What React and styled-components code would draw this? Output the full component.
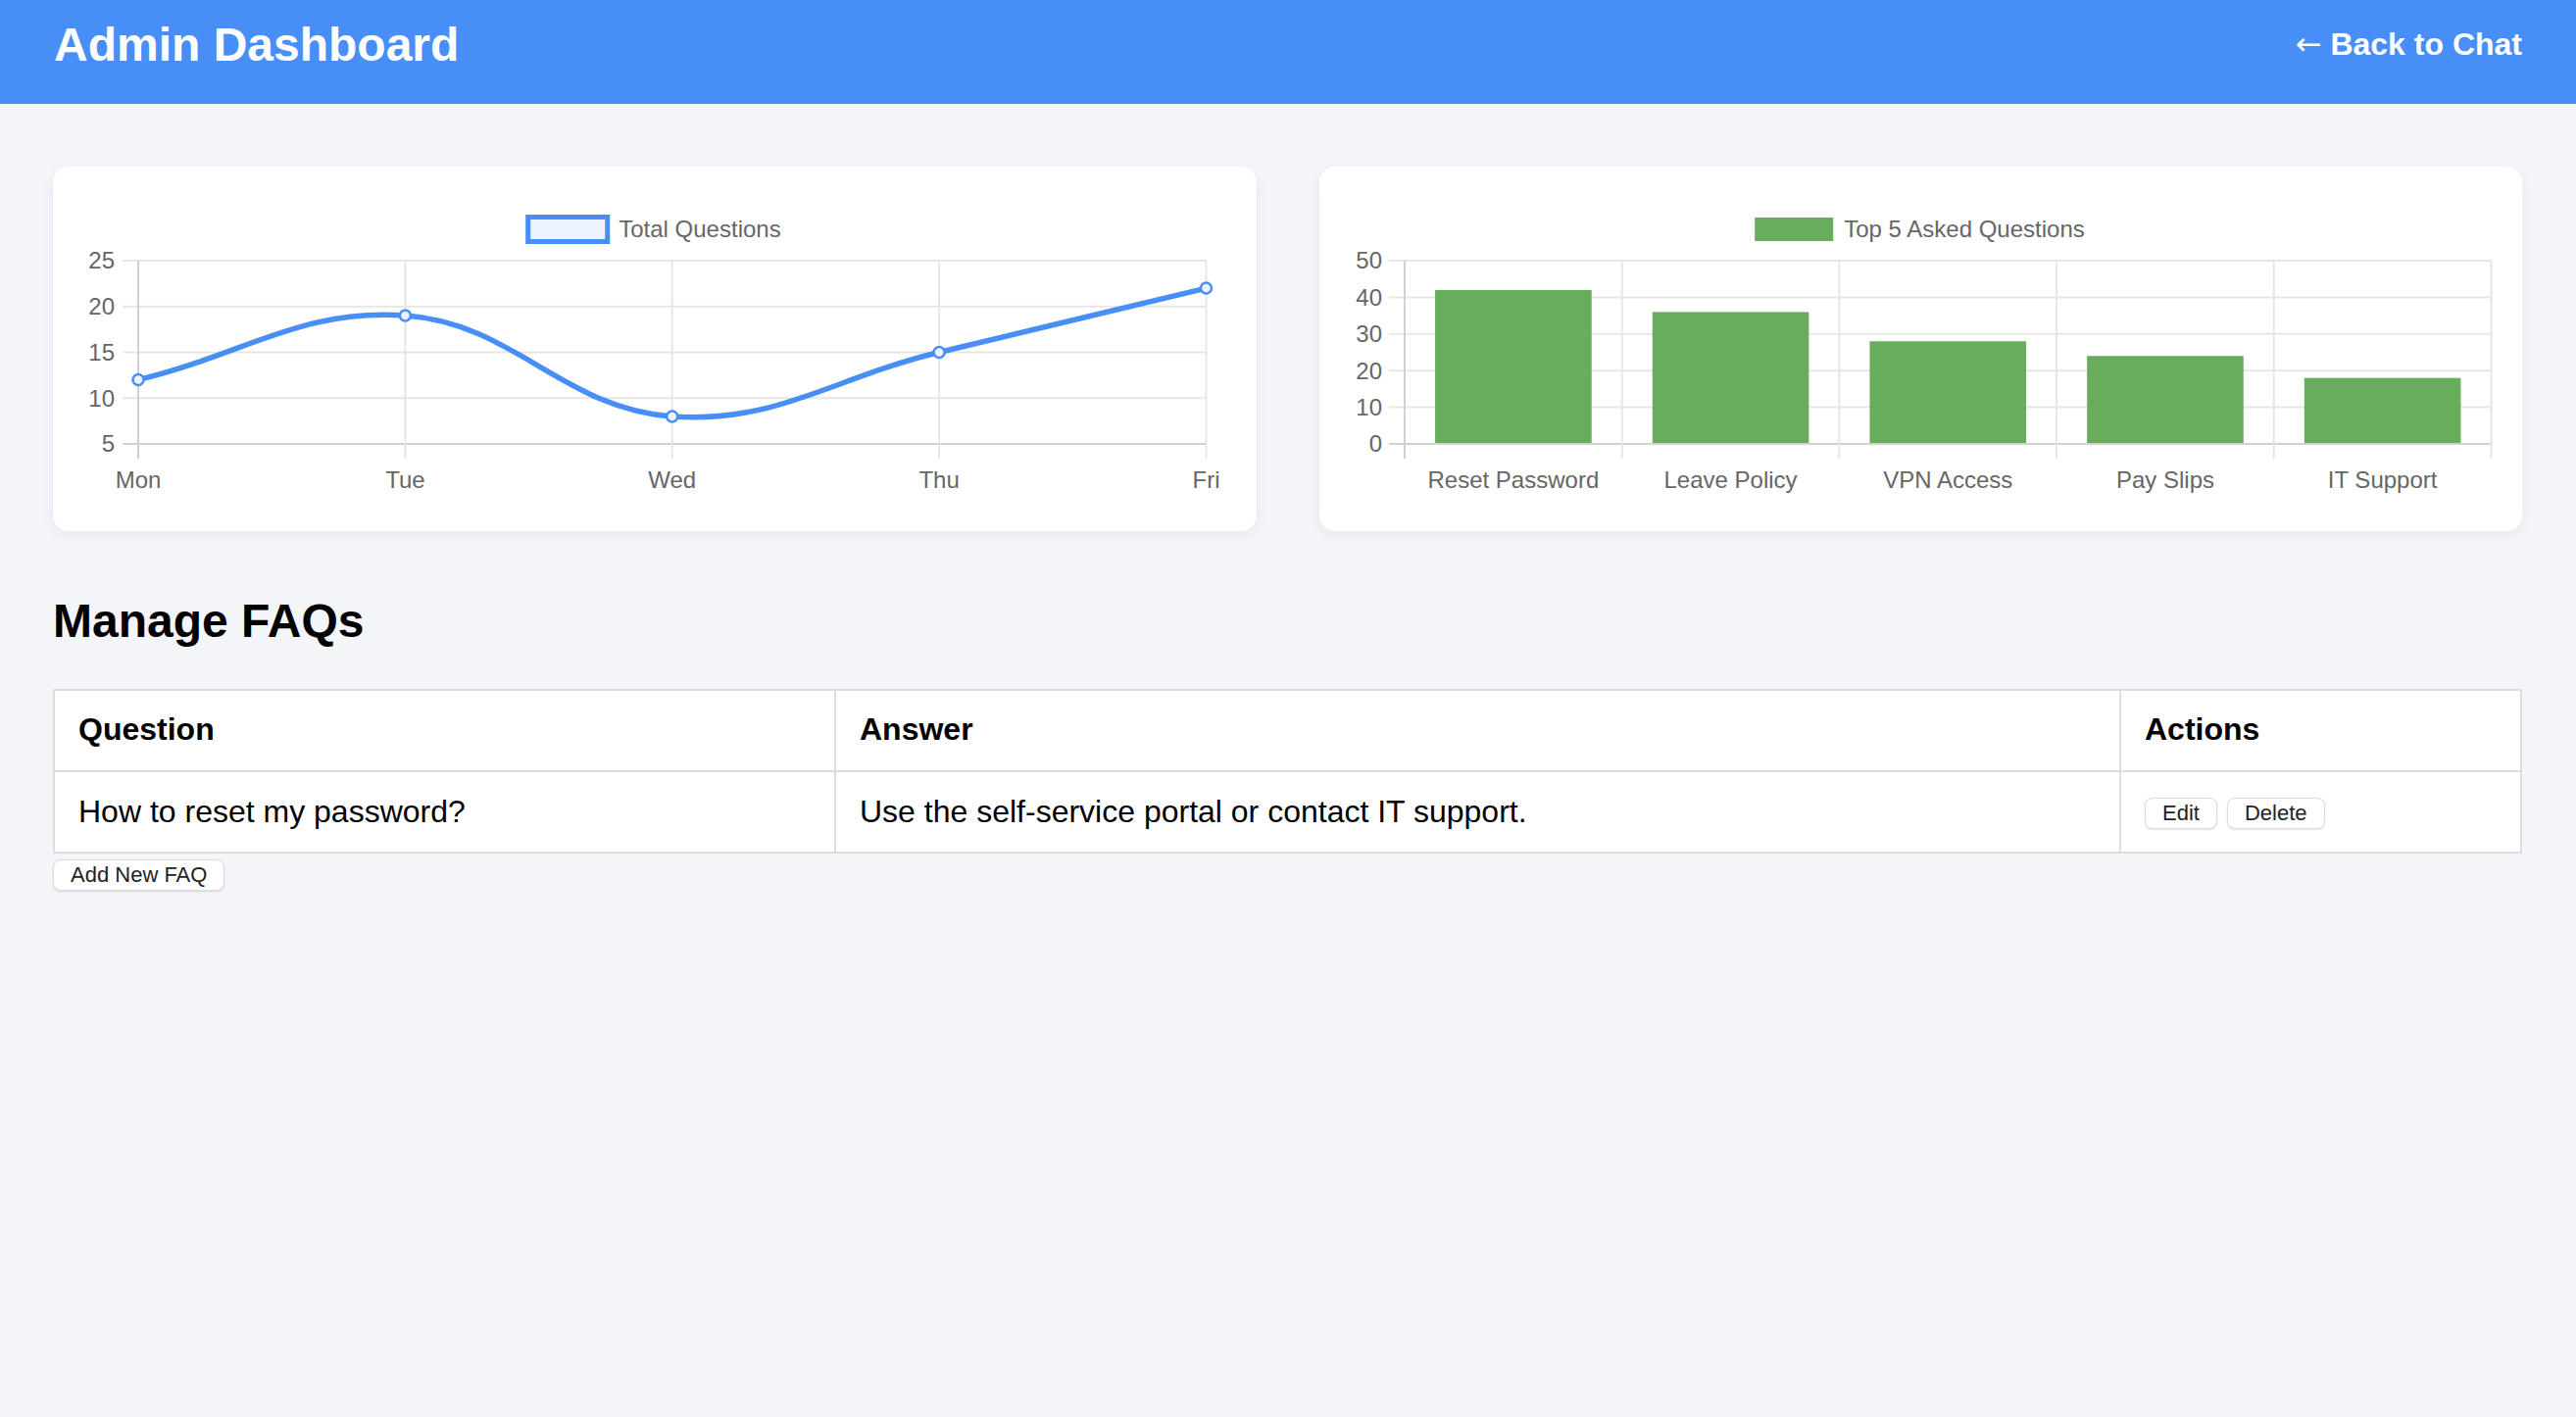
import React from 'react';
import styled, { createGlobalStyle } from 'styled-components';

const BLUE = '#478ff7';
const GREEN = '#68ad5c';

const GlobalStyle = createGlobalStyle`
  * { box-sizing: border-box; }
  html, body {
    margin: 0;
    padding: 0;
    background: #f4f5f9;
    font-family: "Liberation Sans", Arial, Helvetica, sans-serif;
  }
  #root { min-height: 100vh; }
`;

// chart data
const weekly = [
  { day: 'Mon', value: 12 },
  { day: 'Tue', value: 19 },
  { day: 'Wed', value: 8 },
  { day: 'Thu', value: 15 },
  { day: 'Fri', value: 22 },
];

const topQuestions = [
  { label: 'Reset Password', value: 42 },
  { label: 'Leave Policy', value: 36 },
  { label: 'VPN Access', value: 28 },
  { label: 'Pay Slips', value: 24 },
  { label: 'IT Support', value: 18 },
];

const faqs = [
  { question: 'How to reset my password?', answer: 'Use the self-service portal or contact IT support.' },
];

// same spline as chart.js with tension 0.4
const splinePath = (pts, t = 0.4) => {
  const cps = pts.map((p, i) => {
    const prev = pts[i - 1] || p;
    const next = pts[i + 1] || p;
    const d01 = Math.hypot(p.x - prev.x, p.y - prev.y);
    const d12 = Math.hypot(next.x - p.x, next.y - p.y);
    const s01 = d01 / (d01 + d12) || 0;
    const s12 = d12 / (d01 + d12) || 0;
    return {
      prev: { x: p.x - t * s01 * (next.x - prev.x), y: p.y - t * s01 * (next.y - prev.y) },
      next: { x: p.x + t * s12 * (next.x - prev.x), y: p.y + t * s12 * (next.y - prev.y) },
    };
  });
  let d = `M${pts[0].x},${pts[0].y}`;
  for (let i = 1; i < pts.length; i++) {
    d += ` C${cps[i - 1].next.x},${cps[i - 1].next.y} ${cps[i].prev.x},${cps[i].prev.y} ${pts[i].x},${pts[i].y}`;
  }
  return d;
};

const PLOT_TOP = 96;
const PLOT_BOTTOM = 283;
const PLOT_LEFT = 87;

const LineChart = () => {
  const right = 1176;
  const step = (right - PLOT_LEFT) / (weekly.length - 1);
  const yOf = (v) => PLOT_BOTTOM - ((v - 5) / 20) * (PLOT_BOTTOM - PLOT_TOP);
  const ticks = [25, 20, 15, 10, 5];
  const pts = weekly.map((d, i) => ({ x: PLOT_LEFT + i * step, y: yOf(d.value) }));

  return (
    <ChartSvg viewBox="0 0 1227 372" preserveAspectRatio="none">
      {/* legend */}
      <rect x="484.5" y="51.5" width="81" height="25" fill="#ecf3fe" stroke={BLUE} strokeWidth="5" />
      <ChartText x="577" y="72">Total Questions</ChartText>

      {/* grid */}
      {ticks.map((t) => (
        <g key={t}>
          <line x1="71" x2={right} y1={yOf(t)} y2={yOf(t)} stroke={t === 5 ? '#d0d0d0' : '#e6e6e6'} strokeWidth="2" />
          <ChartText x="63" y={yOf(t) + 8.5} textAnchor="end">{t}</ChartText>
        </g>
      ))}
      {weekly.map((d, i) => (
        <g key={d.day}>
          <line x1={PLOT_LEFT + i * step} x2={PLOT_LEFT + i * step} y1={PLOT_TOP} y2="298" stroke={i === 0 ? '#d0d0d0' : '#e6e6e6'} strokeWidth="2" />
          <ChartText x={PLOT_LEFT + i * step} y="328.5" textAnchor="middle">{d.day}</ChartText>
        </g>
      ))}

      {/* line */}
      <path d={splinePath(pts)} fill="none" stroke={BLUE} strokeWidth="5.5" />
      {pts.map((p, i) => (
        <circle key={i} cx={p.x} cy={p.y} r="5.5" fill="#ecf3fe" stroke={BLUE} strokeWidth="2.5" />
      ))}
    </ChartSvg>
  );
};

const BarChart = () => {
  const right = 1195;
  const cat = (right - PLOT_LEFT) / topQuestions.length;
  const yOf = (v) => PLOT_BOTTOM - (v / 50) * (PLOT_BOTTOM - PLOT_TOP);
  const ticks = [50, 40, 30, 20, 10, 0];
  const barW = cat * 0.72;

  return (
    <ChartSvg viewBox="0 0 1227 372" preserveAspectRatio="none">
      {/* legend */}
      <rect x="444" y="52" width="80" height="24" fill={GREEN} />
      <ChartText x="535" y="72">Top 5 Asked Questions</ChartText>

      {/* grid */}
      {ticks.map((t) => (
        <g key={t}>
          <line x1="71" x2={right} y1={yOf(t)} y2={yOf(t)} stroke={t === 0 ? '#d0d0d0' : '#e6e6e6'} strokeWidth="2" />
          <ChartText x="64" y={yOf(t) + 8.5} textAnchor="end">{t}</ChartText>
        </g>
      ))}
      {[0, 1, 2, 3, 4, 5].map((i) => (
        <line key={i} x1={PLOT_LEFT + i * cat} x2={PLOT_LEFT + i * cat} y1={PLOT_TOP} y2="298" stroke={i === 0 ? '#d0d0d0' : '#e6e6e6'} strokeWidth="2" />
      ))}

      {/* bars */}
      {topQuestions.map((q, i) => {
        const cx = PLOT_LEFT + cat * (i + 0.5);
        return (
          <g key={q.label}>
            <rect x={cx - barW / 2} y={yOf(q.value)} width={barW} height={yOf(0) - yOf(q.value) - 1} fill={GREEN} />
            <ChartText x={cx} y="328.5" textAnchor="middle">{q.label}</ChartText>
          </g>
        );
      })}
    </ChartSvg>
  );
};

const App = () => {
  return (
    <>
      <GlobalStyle />
      <Header>
        <Title>Admin Dashboard</Title>
        <BackLink href="#"><Arrow>←</Arrow> Back to Chat</BackLink>
      </Header>

      <Main>
        <ChartGrid>
          <Card><LineChart /></Card>
          <Card><BarChart /></Card>
        </ChartGrid>

        <SectionTitle>Manage FAQs</SectionTitle>

        <FaqTable>
          <colgroup>
            <col style={{ width: 797 }} />
            <col style={{ width: 1311 }} />
            <col />
          </colgroup>
          <thead>
            <tr>
              <Th>Question</Th>
              <Th>Answer</Th>
              <Th>Actions</Th>
            </tr>
          </thead>
          <tbody>
            {faqs.map((faq, index) => (
              <tr key={index}>
                <Td>{faq.question}</Td>
                <Td>{faq.answer}</Td>
                <Td>
                  <ActionRow>
                    <SmallButton>Edit</SmallButton>
                    <SmallButton>Delete</SmallButton>
                  </ActionRow>
                </Td>
              </tr>
            ))}
          </tbody>
        </FaqTable>

        <AddButton>Add New FAQ</AddButton>
      </Main>
    </>
  );
};

const Header = styled.header`
  height: 106px;
  padding: 0 55px 16px 55px;
  background: ${BLUE};
  display: flex;
  align-items: center;
  justify-content: space-between;
  color: #fff;
`;

const Title = styled.h1`
  margin: 0;
  font-size: 48px;
  line-height: 55px;
  font-weight: bold;
`;

const BackLink = styled.a`
  color: #fff;
  text-decoration: none;
  font-size: 32px;
  font-weight: bold;
  line-height: 37px;
`;

const Arrow = styled.span`
  font-family: "DejaVu Sans", sans-serif;
  font-weight: normal;
`;

const Main = styled.main`
  padding: 64px 55px 0 54px;
`;

const ChartGrid = styled.div`
  display: grid;
  grid-template-columns: 1fr 1fr;
  gap: 64px;
`;

const Card = styled.div`
  height: 372px;
  background: #fff;
  border-radius: 16px;
  box-shadow: 0 4px 14px rgba(20, 30, 60, 0.06);
  overflow: hidden;
`;

const ChartSvg = styled.svg`
  display: block;
  width: 100%;
  height: 100%;
`;

const ChartText = styled.text`
  font-family: "Liberation Sans", Arial, Helvetica, sans-serif;
  font-size: 24px;
  fill: #666;
`;

const SectionTitle = styled.h2`
  margin: 64px 0 42px;
  font-size: 48px;
  line-height: 55px;
  font-weight: bold;
  color: #000;
`;

const FaqTable = styled.table`
  width: 100%;
  table-layout: fixed;
  border-collapse: collapse;
  background: #fff;
  border: 2px solid #ddd;
`;

const Th = styled.th`
  text-align: left;
  font-size: 32px;
  line-height: 37px;
  font-weight: bold;
  padding: 21px 24px 23px;
  border: 2px solid #ddd;
  color: #000;
`;

const Td = styled.td`
  font-size: 32px;
  line-height: 37px;
  padding: 22px 24px;
  border: 2px solid #ddd;
  color: #000;
  vertical-align: middle;
`;

const ActionRow = styled.div`
  display: flex;
  gap: 10px;
  padding-top: 2px;
`;

const SmallButton = styled.button`
  height: 32px;
  padding: 0 17px;
  background: #fff;
  border: 1px solid #dcdcdc;
  border-radius: 8px;
  box-shadow: 0 1px 2px rgba(0, 0, 0, 0.12);
  font-family: "Liberation Sans", Arial, Helvetica, sans-serif;
  font-size: 22px;
  color: #222;
  cursor: pointer;
`;

const AddButton = styled(SmallButton)`
  margin-top: 6px;
`;

export default App;
